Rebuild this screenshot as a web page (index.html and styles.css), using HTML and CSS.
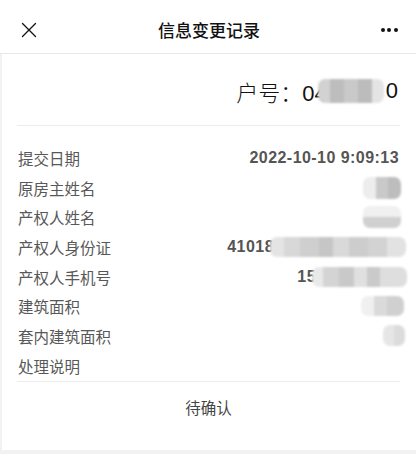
FILE: index.html
```html
<!DOCTYPE html>
<html lang="zh">
<head>
<meta charset="utf-8">
<title>信息变更记录</title>
<link rel="stylesheet" href="styles.css">
</head>
<body>
<div class="page">
  <header class="nav">
    <span class="nav-btn close">
      <svg width="16" height="16" viewBox="0 0 16 16"><path d="M1.5 1.5 L14.5 14.5 M14.5 1.5 L1.5 14.5" stroke="#111" stroke-width="1.3" fill="none" stroke-linecap="round"/></svg>
    </span>
    <h1 class="nav-title">信息变更记录</h1>
    <span class="nav-btn more"><i></i><i></i><i></i></span>
  </header>
  <main class="card">
    <div class="account">户号：04<span class="blur blur-acc"></span>0</div>
    <div class="rows">
      <div class="row"><span class="label">提交日期</span><span class="value date">2022-10-10 9:09:13</span></div>
      <div class="row"><span class="label">原房主姓名</span><span class="value"><span class="blur blur-name"></span></span></div>
      <div class="row"><span class="label">产权人姓名</span><span class="value"><span class="blur blur-name2"></span></span></div>
      <div class="row"><span class="label">产权人身份证</span><span class="value">41018<span class="blur blur-id"></span></span></div>
      <div class="row"><span class="label">产权人手机号</span><span class="value">15<span class="blur blur-phone"></span></span></div>
      <div class="row"><span class="label">建筑面积</span><span class="value"><span class="blur blur-area"></span></span></div>
      <div class="row"><span class="label">套内建筑面积</span><span class="value"><span class="blur blur-inner"></span></span></div>
      <div class="row"><span class="label">处理说明</span><span class="value"></span></div>
    </div>
    <div class="status">待确认</div>
  </main>
</div>
</body>
</html>
```
FILE: styles.css
```css
html, body {
  margin: 0;
  padding: 0;
}
body {
  background: #f2f2f2;
  font-family: "Noto Sans CJK SC", "Liberation Sans", sans-serif;
  color: #222;
  width: 416px;
  height: 454px;
  overflow: hidden;
}
.page {
  margin-left: 2px;
  background: #fff;
  height: 450px;
  display: flex;
  flex-direction: column;
}
.nav {
  height: 53px;
  border-bottom: 1px solid #e8e8e8;
  display: flex;
  align-items: center;
  justify-content: space-between;
  padding: 0 18px 0 20px;
  margin-left: -2px;
  background: #fff;
}
.nav-btn {
  width: 18px;
  height: 18px;
  display: flex;
  align-items: center;
  justify-content: center;
  margin-top: 6px;
}
.nav-title {
  margin: 6px 0 0 0;
  font-size: 17px;
  font-weight: 500;
  color: #111;
}
.more {
  width: 18px;
  gap: 2.5px;
}
.more i {
  width: 4px;
  height: 4px;
  background: #111;
  border-radius: 50%;
  display: block;
}
.card {
  flex: 1;
  padding: 0 16px 0 15px;
  display: flex;
  flex-direction: column;
}
.account {
  height: 72px;
  border-bottom: 1px solid #ececec;
  display: flex;
  align-items: center;
  justify-content: flex-end;
  font-size: 22px;
  font-weight: 300;
  color: #111;
  padding-right: 2px;
  padding-top: 2px;
  box-sizing: border-box;
  font-family: "Liberation Sans", "Noto Sans CJK SC", sans-serif;
}
.account .blur-acc {
  width: 66px;
  height: 24px;
  margin: 0 2px 0 -9px;
}
.rows {
  padding: 17px 0 0 0;
  border-bottom: 1px solid #ececec;
}
.row {
  height: 29.7px;
  display: flex;
  align-items: center;
  justify-content: space-between;
  padding: 0 2px 0 1px;
}
.label {
  font-size: 15.5px;
  color: #585858;
}
.value {
  display: flex;
  align-items: center;
  font-family: "Liberation Sans", sans-serif;
  font-weight: bold;
  font-size: 16px;
  color: #555;
  letter-spacing: 0.45px;
}
.date {
  margin-right: -1px;
}
.blur {
  display: inline-block;
  border-radius: 7px;
  filter: blur(1px);
}
.blur-acc {
  background: linear-gradient(90deg, #d2d2d2 0 18%, #bdbdbd 18% 40%, #c9c9c9 40% 60%, #bcbcbc 60% 82%, #e4e4e4 82%);
}
.blur-name {
  width: 38px;
  height: 22px;
  margin-right: -3px;
  background: linear-gradient(90deg, #ededed 0 33%, #c9c9c9 33% 66%, #bdbdbd 66%);
}
.blur-name2 {
  width: 38px;
  height: 22px;
  margin-right: -3px;
  background: linear-gradient(180deg, #f0f0f0 0 50%, #d0d0d0 50%);
}
.blur-id {
  width: 136px;
  height: 20px;
  margin: 0 -8px 0 -4px;
  background: linear-gradient(90deg, #e4e4e4 0 10%, #d8d8d8 10% 22%, #cfcfcf 22% 36%, #c6c6c6 36% 46%, #d9d9d9 46% 58%, #cdcdcd 58% 72%, #d3d3d3 72% 86%, #e2e2e2 86%);
}
.blur-phone {
  width: 95px;
  height: 20px;
  margin: 0 -9px 0 -4px;
  background: linear-gradient(90deg, #e9e9e9 0 12%, #d4d4d4 12% 28%, #c9c9c9 28% 44%, #e0e0e0 44% 58%, #cacaca 58% 72%, #dedede 72%);
}
.blur-area {
  width: 43px;
  height: 20px;
  margin-right: -6px;
  background: linear-gradient(90deg, #f0f0f0 0 30%, #dadada 30% 60%, #d0d0d0 60%);
}
.blur-inner {
  width: 22px;
  height: 21px;
  margin-right: -7px;
  background: linear-gradient(90deg, #e6e6e6 0 50%, #dcdcdc 50%);
}
.status {
  padding-top: 14px;
  text-align: center;
  font-size: 15.5px;
  color: #444;
  line-height: 22px;
}
```
